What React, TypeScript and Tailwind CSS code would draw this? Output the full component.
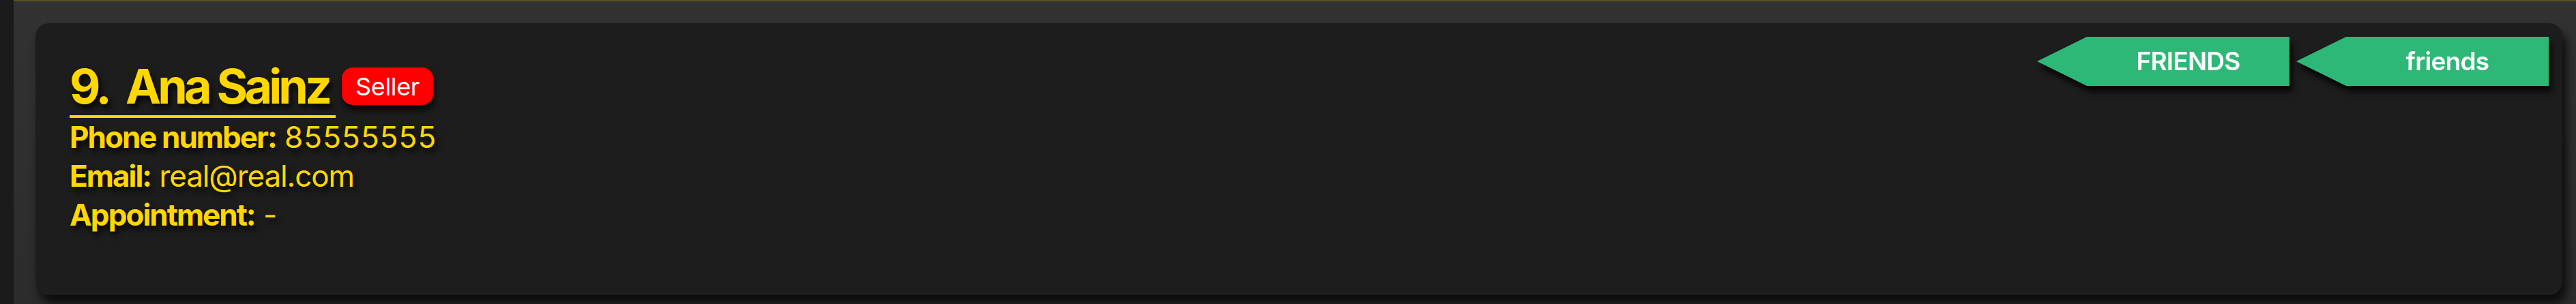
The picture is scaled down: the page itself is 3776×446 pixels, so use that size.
import React from "react";

type Person = {
  index: number;
  name: string;
  role: string;
  phone: string;
  email: string;
  appointment: string;
  tags: string[];
};

const person: Person = {
  index: 9,
  name: "Ana Sainz",
  role: "Seller",
  phone: "85555555",
  email: "real@real.com",
  appointment: "-",
  tags: ["FRIENDS", "friends"],
};

export default function App() {
  return (
    <div className="flex h-[446px] w-full bg-[#1b1b1b] font-['Inter',sans-serif]">
      <div className="w-5 shrink-0" />
      <div className="flex-1 border-t-2 border-[#5b4e22] bg-gradient-to-b from-[#323232] to-[#2c2c2c] pl-[32px] pr-5 pt-8">
        <PersonCard person={person} />
      </div>
    </div>
  );
}

function PersonCard({ person }: { person: Person }) {
  return (
    <section className="flex h-[399px] items-start justify-between rounded-[20px] bg-[#1d1d1d] p-5 shadow-[6px_12px_14px_rgba(0,0,0,0.75)]">
      <div className="pl-[30px] pt-[38px] text-[#ffd700] [text-shadow:4px_6px_8px_rgba(0,0,0,0.8)]">
        <div className="flex items-start gap-[9px]">
          <h2 className="border-b-4 border-[#ffd700] pb-[7px] pr-[10px] text-[70px] font-bold leading-none tracking-[-0.07em]">
            <span>{person.index}.</span>
            <span className="ml-[25px]">{person.name}</span>
          </h2>
          <span className="mt-[7px] flex h-[55px] items-center rounded-[16px] bg-[#ff0000] px-[20px] text-[36px] leading-none tracking-[-0.01em] text-white shadow-[2px_8px_10px_rgba(0,0,0,0.75)] [text-shadow:none]">
            {person.role}
          </span>
        </div>
        <div className="text-[44px] leading-[57px]">
          <p>
            <span className="font-bold tracking-[-0.045em]">Phone number:</span>{" "}
            <span className="tracking-[0.025em]">{person.phone}</span>
          </p>
          <p>
            <span className="font-bold tracking-[-0.045em]">Email:</span>{" "}
            <span className="tracking-[-0.025em]">{person.email}</span>
          </p>
          <p>
            <span className="font-bold tracking-[-0.045em]">Appointment:</span> {person.appointment}
          </p>
        </div>
      </div>

      <div className="flex gap-[10px]">
        {person.tags.map((tag) => (
          <div key={tag} className="[filter:drop-shadow(4px_8px_5px_rgba(0,0,0,0.85))]">
            <div className="flex h-[72px] w-[370px] items-center justify-center bg-[#2eb877] pl-[73px] text-[37px] font-semibold tracking-[-0.02em] text-white [clip-path:polygon(73px_0,100%_0,100%_100%,73px_100%,0_50%)]">
              {tag}
            </div>
          </div>
        ))}
      </div>
    </section>
  );
}
